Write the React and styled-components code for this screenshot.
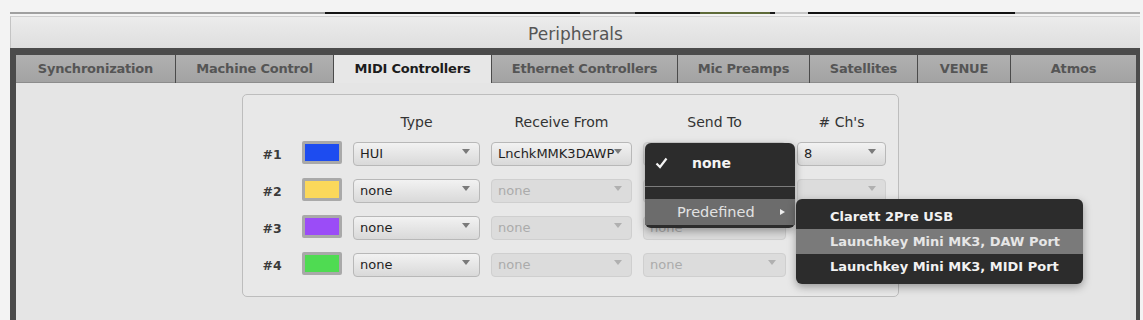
import React from 'react';
import styled, { createGlobalStyle } from 'styled-components';

const GlobalStyle = createGlobalStyle`
  html, body {
    margin: 0;
    padding: 0;
    background: #f3f3f3;
    overflow: hidden;
  }
  body {
    font-family: 'DejaVu Sans', 'Liberation Sans', sans-serif;
  }
`;

const Page = styled.div`
  width: 1143px;
  height: 320px;
  overflow: hidden;
  background: #f3f3f3;
`;

/* window behind, only its bottom edge shows */
const Backdrop = styled.div`
  height: 13px;
  border-bottom: 2px solid transparent;
  margin-left: 10px;
  width: 1130px;
  background:
    linear-gradient(to right,
      #a0a0a0 0 315px, #151515 315px 570px, #6a6a6a 570px 625px,
      #151515 625px 690px, #5f6b3a 690px 760px, #1a1a1a 760px 765px,
      #c8c8c8 765px 798px, #121212 798px 1005px, #b0b0b0 1005px)
    bottom / 100% 2px no-repeat;
  padding-bottom: 1px;
`;

const Window = styled.div`
  margin-left: 10px;
  width: 1130px;
  display: flex;
  flex-direction: column;
`;

const TitleBar = styled.div`
  height: 32px;
  display: flex;
  align-items: center;
  justify-content: center;
  background: linear-gradient(#ececec, #dedede);
  border-top: 1px solid #d0d0d0;
  border-left: 1px solid #c4c4c4;
  color: #555;
  font-size: 17px;
  padding-top: 2px;
  box-sizing: border-box;
`;

const Body = styled.div`
  background: #4b4b4b;
  padding: 7px 4px 0 6px;
  height: 280px;
`;

const TabBar = styled.div`
  display: flex;
  gap: 1px;
  height: 28px;
`;

const Tab = styled.div`
  width: ${p => (p.$w ? `${p.$w}px` : 'auto')};
  flex: ${p => (p.$w ? 'none' : 1)};
  display: flex;
  align-items: center;
  justify-content: center;
  font-size: 13px;
  font-weight: bold;
  letter-spacing: -0.2px;
  color: ${p => (p.$active ? '#1c1c1c' : '#555')};
  background: ${p => (p.$active ? '#e7e7e7' : 'linear-gradient(#b0b0b0, #a3a3a3)')};
  border-bottom: 1px solid ${p => (p.$active ? '#e7e7e7' : '#8c8c8c')};
  box-sizing: border-box;
`;

const Content = styled.div`
  background: #e5e5e5;
  height: 240px;
  padding: 11px 0 0 226px;
  box-sizing: border-box;
`;

const Panel = styled.div`
  position: relative;
  width: 657px;
  height: 203px;
  box-sizing: border-box;
  border: 1px solid #bdbdbd;
  border-radius: 5px;
  background: #e8e8e8;
  padding: 19px 0 0 13px;
  display: grid;
  grid-template-columns: 35px 40px 127px 141px 143px 89px;
  grid-template-rows: 15px repeat(4, 24px);
  column-gap: 11px;
  row-gap: 13px;
  align-content: start;
`;

const Header = styled.div`
  font-size: 14px;
  line-height: 15px;
  color: #333;
  text-align: center;
  margin-top: 1px;
`;

const RowLabel = styled.div`
  font-size: 12.5px;
  font-weight: bold;
  color: #3a3a3a;
  align-self: center;
  text-align: center;
  padding-right: 3px;
`;

const Swatch = styled.div`
  height: 23px;
  margin-top: -1px;
  box-sizing: border-box;
  border: 3px solid #a9a9a9;
  border-radius: 2px;
  background: ${p => p.$color};
`;

const Select = styled.div`
  position: relative;
  height: 24px;
  box-sizing: border-box;
  border: 1px solid ${p => (p.$disabled ? '#cfcfcf' : '#b8b8b8')};
  border-radius: 4px;
  background: ${p => (p.$disabled ? '#dcdcdc' : 'linear-gradient(#f2f2f2, #d9d9d9)')};
  color: ${p => (p.$disabled ? '#ababab' : '#1f1f1f')};
  font-size: 13px;
  line-height: 22px;
  padding-left: 6px;
  white-space: nowrap;
  overflow: hidden;
  &::after {
    content: '';
    position: absolute;
    right: 9px;
    top: 6px;
    border-left: 4px solid transparent;
    border-right: 4px solid transparent;
    border-top: 5px solid ${p => (p.$disabled ? '#b0b0b0' : '#7a7a7a')};
  }
`;

const Menu = styled.div`
  position: absolute;
  left: ${p => p.$left}px;
  top: ${p => p.$top}px;
  width: ${p => p.$width}px;
  background: #2c2c2c;
  border-radius: 6px;
  padding: ${p => p.$pad};
  box-shadow: 0 3px 8px rgba(0, 0, 0, 0.35);
  z-index: 2;
`;

const MenuItem = styled.div`
  height: ${p => p.$h}px;
  display: flex;
  align-items: center;
  padding-left: ${p => p.$indent}px;
  font-size: 13px;
  font-weight: bold;
  color: ${p => (p.$hl ? '#e6e6e6' : '#f2f2f2')};
  background: ${p => (p.$hl ? p.$hl : 'transparent')};
  white-space: nowrap;
`;

const MenuLabel = styled.span`
  font-size: ${p => (p.$light ? '14.5px' : '14px')};
  font-weight: ${p => (p.$light ? 'normal' : 'bold')};
  color: ${p => (p.$light ? '#e2e2e2' : '#f4f4f4')};
`;

const Check = styled.svg`
  width: 13px;
  height: 12px;
  margin-right: 24px;
`;

const Separator = styled.div`
  height: 1px;
  background: #7c7c7c;
  margin: 7px 0 12px;
`;

const SubArrow = styled.svg`
  width: 5px;
  height: 6px;
  margin-left: auto;
  margin-right: 10px;
`;

const rows = [
  { n: '#1', color: '#1d4cf0', type: 'HUI', recv: 'LnchkMMK3DAWP', send: '', ch: '8', active: true },
  { n: '#2', color: '#fbd85a', type: 'none', recv: 'none', send: '', ch: '' },
  { n: '#3', color: '#9b4cf7', type: 'none', recv: 'none', send: 'none', ch: '' },
  { n: '#4', color: '#4fdb52', type: 'none', recv: 'none', send: 'none', ch: '' },
];

const tabs = [
  ['Synchronization', 159],
  ['Machine Control', 157],
  ['MIDI Controllers', 157, true],
  ['Ethernet Controllers', 185],
  ['Mic Preamps', 131],
  ['Satellites', 107],
  ['VENUE', 92],
  ['Atmos', 0],
];

export default function App() {
  return (
    <Page>
      <GlobalStyle />
      <Backdrop />
      <Window>
        <TitleBar>Peripherals</TitleBar>
        <Body>
          <TabBar>
            {tabs.map(([label, w, active]) => (
              <Tab key={label} $w={w} $active={active}>{label}</Tab>
            ))}
          </TabBar>
          <Content>
            <Panel>
              <span />
              <span />
              <Header>Type</Header>
              <Header>Receive From</Header>
              <Header>Send To</Header>
              <Header># Ch's</Header>
              {rows.map(r => (
                <React.Fragment key={r.n}>
                  <RowLabel>{r.n}</RowLabel>
                  <Swatch $color={r.color} />
                  <Select>{r.type}</Select>
                  <Select $disabled={!r.active}>{r.recv}</Select>
                  <Select $disabled>{r.send}</Select>
                  <Select $disabled={!r.active}>{r.ch}</Select>
                </React.Fragment>
              ))}

              <Menu $left={402} $top={48} $width={150} $pad="4px 0 3px">
                <MenuItem $h={32} $indent={10}>
                  <Check viewBox="0 0 13 12">
                    <path d="M1.5 6.5 L5 10 L11.5 1.5" fill="none" stroke="#f4f4f4" strokeWidth="2.2" />
                  </Check>
                  <MenuLabel>none</MenuLabel>
                </MenuItem>
                <Separator />
                <MenuItem $h={26} $indent={32} $hl="#6c6c6c">
                  <MenuLabel $light>Predefined</MenuLabel>
                  <SubArrow viewBox="0 0 5 6">
                    <path d="M0 0 L5 3 L0 6 Z" fill="#eee" />
                  </SubArrow>
                </MenuItem>
              </Menu>

              <Menu $left={553} $top={104} $width={287} $pad="5px 0 5px">
                <MenuItem $h={25} $indent={34}>Clarett 2Pre USB</MenuItem>
                <MenuItem $h={25} $indent={34} $hl="#7a7a7a">Launchkey Mini MK3, DAW Port</MenuItem>
                <MenuItem $h={25} $indent={34}>Launchkey Mini MK3, MIDI Port</MenuItem>
              </Menu>
            </Panel>
          </Content>
        </Body>
      </Window>
    </Page>
  );
}
